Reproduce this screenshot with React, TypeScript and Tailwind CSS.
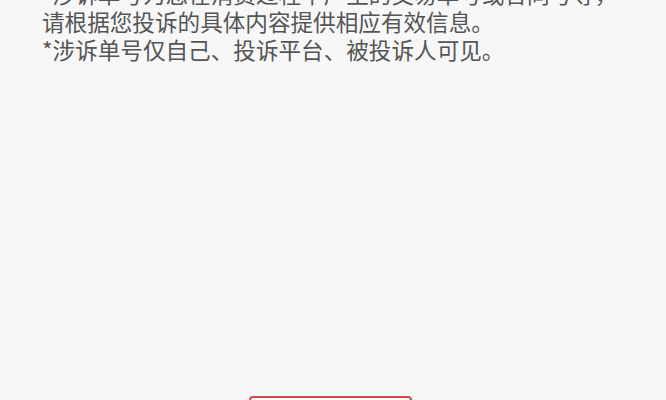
export default function App() {
  return (
    <div className="h-[400px] w-full overflow-hidden bg-[#f7f7f7] font-['Noto_Sans_CJK_SC',sans-serif]">
      {/* 说明文字 */}
      <div className="-mt-[20px] pl-[42px] text-[22.6px] leading-[28px] text-[#555555]">
        <p>*涉诉单号为您在消费过程中产生的交易单号或合同号等，</p>
        <p>请根据您投诉的具体内容提供相应有效信息。</p>
        <p>*涉诉单号仅自己、投诉平台、被投诉人可见。</p>
      </div>

      {/* 提交按钮 */}
      <div className="mt-[332px] ml-[249px] w-[163px]">
        <button className="h-[44px] w-full rounded-[4px] border-2 border-[#d4474b] bg-white text-[18px] text-[#d4474b]">
          提交
        </button>
      </div>
    </div>
  );
}
